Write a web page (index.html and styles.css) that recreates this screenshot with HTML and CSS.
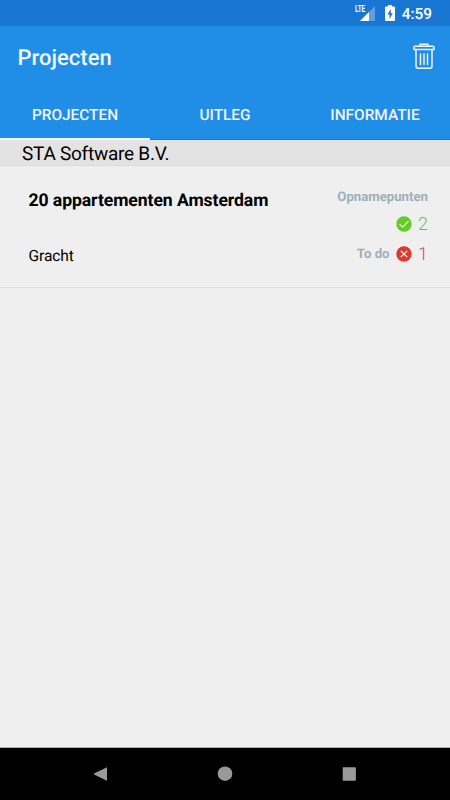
FILE: index.html
```html
<!DOCTYPE html>
<html lang="nl">
<head>
<meta charset="utf-8">
<title>Projecten</title>
<link rel="stylesheet" href="styles.css">
</head>
<body>
<div class="screen">
  <div class="status">
    <span class="signal">
      <svg width="21" height="18" viewBox="0 0 21 18"><path d="M20 1V16H5Z" fill="#5f9fe1"/><path d="M14 7V16H5Z" fill="#fff"/></svg>
      <span class="lte">LTE</span>
    </span>
    <svg class="battery" width="10" height="17" viewBox="0 0 10 17"><path d="M3 0H7V1.5H9Q10 1.5 10 2.5V15Q10 16 9 16H1Q0 16 0 15V2.5Q0 1.5 1 1.5H3Z" fill="#fff"/><path d="M5.8 4L2.4 9.6H4.5V14L7.8 8.2H5.8Z" fill="#1976d2"/></svg>
    <span class="time">4:59</span>
  </div>
  <header class="bar">
    <h1 class="title">Projecten</h1>
    <svg class="trash" width="22" height="27" viewBox="0 0 22 27" fill="none" stroke="#f2f5f8" stroke-width="1.5" stroke-linejoin="round" stroke-linecap="round"><path d="M7 3.2V1.2H15V3.2M2.2 3.2H19.8Q21 3.2 21 4.5V6.4H1V4.5Q1 3.2 2.2 3.2ZM3 7V23Q3 25.2 5 25.2H17Q19 25.2 19 23V7"/><path d="M7.5 11V21.5M11 11V21.5M14.5 11V21.5"/></svg>
  </header>
  <nav class="tabs">
    <span class="tab active">PROJECTEN</span>
    <span class="tab">UITLEG</span>
    <span class="tab">INFORMATIE</span>
  </nav>
  <h2 class="section">STA Software B.V.</h2>
  <article class="project">
    <div class="info">
      <span class="name">20 appartementen Amsterdam</span>
      <span class="place">Gracht</span>
    </div>
    <div class="stats">
      <span class="label">Opnamepunten</span>
      <div class="stat done">
        <svg width="16" height="16" viewBox="0 0 16 16"><circle cx="8" cy="8" r="7.7" fill="#64cb28"/><path d="M3.5 8.2L6.7 11.1L12.5 5.2" fill="none" stroke="#f5fff0" stroke-width="1.1"/></svg>
        <span class="count">2</span>
      </div>
      <div class="stat todo">
        <span class="label">To do</span>
        <svg width="16" height="16" viewBox="0 0 16 16"><circle cx="8" cy="8" r="7.7" fill="#dc3a2d"/><path d="M4.8 4.8L11.2 11.2M11.2 4.8L4.8 11.2" stroke="#fff" stroke-width="1.2"/></svg>
        <span class="count">1</span>
      </div>
    </div>
  </article>
  <main class="empty"></main>
  <footer class="nav">
    <svg width="16" height="16" viewBox="0 0 16 16"><path d="M15 1.2V14.8L2 8.5V7.5Z" fill="#999"/></svg>
    <svg width="16" height="16" viewBox="0 0 16 16"><circle cx="8" cy="7.7" r="7.3" fill="#999"/></svg>
    <svg width="16" height="16" viewBox="0 0 16 16"><rect x="1.7" y="1.2" width="13.2" height="13.6" rx=".8" fill="#999"/></svg>
  </footer>
</div>
</body>
</html>
```
FILE: styles.css
```css
* { box-sizing: border-box; }
body { margin: 0; font-family: Roboto, sans-serif; color: #000; text-rendering: geometricPrecision; }
svg { display: block; flex: none; }
.screen { width: 450px; height: 800px; display: flex; flex-direction: column; background: #efefef; }
.status { height: 26px; background: #1976d2; display: flex; align-items: flex-start; justify-content: flex-end; padding: 5px 18px 0 0; color: #fff; }
.signal { position: relative; margin-right: 9px; }
.lte { position: absolute; left: 0; top: -1px; font-size: 10px; line-height: 11px; font-weight: 700; transform: scaleX(.63); transform-origin: left; }
.battery { margin-right: 8px; }
.time { font-size: 15.4px; line-height: 18px; font-weight: 500; }
.signal, .battery { transform: translateX(1px); }
.bar { height: 64px; background: #208de7; display: flex; align-items: center; justify-content: space-between; padding: 0 15.5px 0 17.5px; }
.title { margin: 2px 0 0; font-size: 22px; line-height: 26px; font-weight: 500; color: #f2f5f8; }
.trash { margin-top: -3px; }
.tabs { height: 50px; background: #208de7; display: grid; grid-template-columns: repeat(3, 1fr); border-bottom: 1px solid #1179dc; }
.tab { display: flex; justify-content: center; font-size: 15.4px; line-height: 20px; padding-top: 15px; font-weight: 500; color: #eff4f8; }
.tab.active { border-bottom: 2px solid #f5f5f5; margin-bottom: -1px; }
.section { margin: 0; height: 26px; background: #e3e3e3; border-bottom: 1px solid #d7dce1; padding-left: 22px; font-size: 19px; line-height: 27px; font-weight: 400; letter-spacing: -.25px; }
.project { height: 122px; display: flex; justify-content: space-between; padding: 23px 22px 0 28.5px; border-bottom: 1px solid #e1e1e1; }
.info { display: flex; flex-direction: column; }
.name { font-size: 17.6px; line-height: 24px; font-weight: 700; letter-spacing: -.08px; }
.place { font-size: 15.6px; line-height: 20px; margin-top: 33px; font-weight: 400; letter-spacing: -.1px; }
.stats { display: flex; flex-direction: column; align-items: flex-end; }
.label { font-size: 13.2px; line-height: 18px; font-weight: 700; color: #9eafba; }
.stat { display: flex; align-items: center; height: 20px; }
.stat svg { margin-top: -2px; }
.done { margin-top: 8px; color: #64cb28; }
.todo { margin-top: 10px; color: #e44848; }
.todo .label { margin-right: 6px; }
.count { font-size: 18px; line-height: 20px; margin-left: 6.5px; font-weight: 300; }
.empty { flex: 1; }
.nav { height: 53px; background: #000; border-top: 1px solid #aaa; display: flex; justify-content: space-between; padding: 18px 93px 0 92px; }
```
